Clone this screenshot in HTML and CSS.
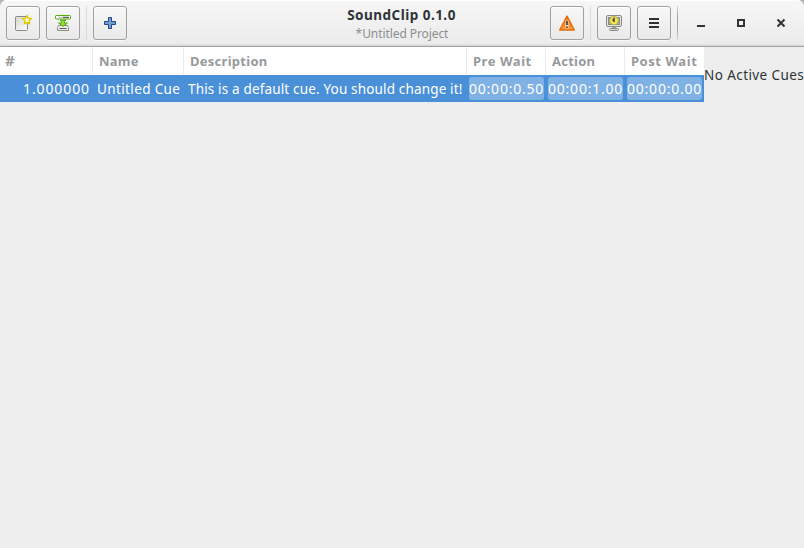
FILE: index.html
```html
<!DOCTYPE html>
<html lang="en">
<head>
<meta charset="utf-8">
<title>SoundClip</title>
<link rel="stylesheet" href="styles.css">
</head>
<body>
<div class="window">
  <header class="headerbar">
    <div class="tools start">
      <button class="btn" aria-label="New">
        <svg width="18" height="18" viewBox="0 0 18 18"><defs><linearGradient id="paper" x2="1" y2="1"><stop stop-color="#d3d7cf"/><stop offset="1" stop-color="#fff"/></linearGradient></defs><rect x="1.500" y="2.500" width="12" height="14" rx="1" fill="url(#paper)" stroke="#888a85"/><path d="M13 1.700l1.300 2.400 2.900.5-2 2.100.4 3L13 8.500l-2.600 1.200.4-3-2-2.100 2.900-.5z" fill="#fffce0" stroke="#e3c800" stroke-width="1.400"/></svg>
      </button>
      <button class="btn" aria-label="Save">
        <svg width="18" height="18" viewBox="0 0 18 18"><path d="M4.500 11.500h9l1 2v3h-11v-3z" fill="#eeeeec" stroke="#888a85"/><path d="M5.500 14.500h7" stroke="#555753"/><rect x="1.500" y="1.500" width="15" height="3.500" rx=".8" fill="#fff" stroke="#4eae0a"/><path d="M4 3.300h5" stroke="#babdb6"/><path d="M9 3.300h6" stroke="#2e3436"/><path d="M6 6h6L10.500 7.500V9h3L9 12.500 4.500 9h3V7.500z" fill="#8ae234" stroke="#4e9a06" stroke-width=".8"/></svg>
      </button>
      <i class="sep"></i>
      <button class="btn" aria-label="Add">
        <svg width="18" height="18" viewBox="0 0 18 18"><path d="M7.500 3.500h3v4h4v3h-4v4h-3v-4h-4v-3h4z" fill="#729fcf" stroke="#204a87" stroke-linejoin="round"/></svg>
      </button>
    </div>
    <div class="titles"><h1>SoundClip 0.1.0</h1><p>*Untitled Project</p></div>
    <div class="tools end">
      <button class="btn" aria-label="Warning">
        <svg width="18" height="18" viewBox="0 0 18 18"><defs><linearGradient id="warn" x2="0" y2="1"><stop stop-color="#f57900"/><stop offset="1" stop-color="#f9993c"/></linearGradient></defs><path d="M9 2.200L16.300 16H1.700z" fill="url(#warn)" stroke="#e66c0c" stroke-width="1.400" stroke-linejoin="round"/><path d="M9 6.500v8" stroke="#fbe3c8" stroke-width="3"/><path d="M9 7v4M9 12.500v1.500" stroke="#2e3436" stroke-width="1.600"/></svg>
      </button>
      <i class="sep"></i>
      <button class="btn" aria-label="Show">
        <svg width="18" height="18" viewBox="0 0 18 18"><rect x="1.500" y="1.500" width="15" height="11" rx="1.500" fill="#e6e8e2" stroke="#888a85"/><rect x="3.500" y="3.500" width="11" height="7" fill="#a9b3b0" stroke="#888a85"/><path d="M7 13h4v2H7z" fill="#a5a7a2"/><rect x="4.500" y="14.500" width="9" height="2" rx="1" fill="#d3d7cf" stroke="#888a85"/><circle cx="9" cy="6.500" r="4.300" fill="#f3e352" stroke="#b3a43a" stroke-width=".8"/><path d="M9 3.500v4.500M7.500 6h1.500" stroke="#2e3436" stroke-width="1.300"/></svg>
      </button>
      <button class="btn menu" aria-label="Menu">
        <svg width="18" height="18" viewBox="0 0 18 18"><path d="M4 5h10M4 9h10M4 13h10" stroke="#2e3436" stroke-width="2"/></svg>
      </button>
      <i class="sep dark"></i>
      <div class="controls">
        <svg width="16" height="16" viewBox="0 0 16 16"><path d="M4 11h8" stroke="#2e3436" stroke-width="2"/></svg>
        <svg width="16" height="16" viewBox="0 0 16 16"><path d="M5 5h6v6H5z" fill="none" stroke="#2e3436" stroke-width="2"/></svg>
        <svg width="16" height="16" viewBox="0 0 16 16"><path d="M4.500 4.500l7 7M11.500 4.500l-7 7" stroke="#2e3436" stroke-width="2"/></svg>
      </div>
    </div>
  </header>
  <main class="content">
    <div class="cues">
      <div class="row head">
        <span class="h-num">#</span><span class="h-name">Name</span><span class="h-desc">Description</span><span class="h-pre">Pre Wait</span><span class="h-act">Action</span><span class="h-post">Post Wait</span>
      </div>
      <div class="row cue">
        <span class="num">1.000000</span><span class="name">Untitled Cue</span><span class="desc">This is a default cue. You should change it!</span><span class="time"><b>00:00:0.50</b></span><span class="time"><b>00:00:1.00</b></span><span class="time"><b>00:00:0.00</b></span>
      </div>
    </div>
    <aside class="active">No Active Cues</aside>
  </main>
</div>
</body>
</html>
```
FILE: styles.css
```css
* { box-sizing: border-box; }
body { margin: 0; background: #b4b6b3; font: 13.5px/20px "Noto Sans", sans-serif; color: #2e3436; }
.window { width: 804px; height: 548px; display: flex; flex-direction: column; overflow: hidden; background: #ededed; border-radius: 7px 7px 0 0; }
.headerbar { height: 47px; flex: none; display: grid; grid-template-columns: 254px 295px 255px; border-bottom: 1px solid #a1a1a1; background: linear-gradient(#f7f7f7, #ebebeb 44px, #d9d9d9 45px); box-shadow: inset 0 1px #fff; }
.tools { display: flex; align-items: flex-start; padding-top: 6px; }
.start { padding-left: 6px; gap: 6px; }
.end { padding-left: 1px; gap: 6px; }
.btn { width: 34px; height: 34px; padding: 0; display: grid; place-items: center; border: 1px solid #a1a1a1; border-radius: 3px; background: linear-gradient(#f8f8f8, #e9e9e9); box-shadow: inset 0 1px #fff, 0 1px #f8f8f8; }
.btn svg, .controls svg { display: block; }
.sep { width: 1px; height: 34px; background: #dadada; }
.dark { background: linear-gradient(#d8d8d8, #a5a5a5 30%, #a5a5a5 70%, #d8d8d8); }
.controls { display: flex; gap: 24px; padding: 9px 0 0 9px; }
.titles { text-align: center; white-space: nowrap; }
.titles h1 { margin: 5px 0 0; font-size: 13.5px; line-height: 20px; font-weight: 700; letter-spacing: .48px; }
.titles p { margin: 0; padding-left: 1px; font-size: 12px; line-height: 18px; letter-spacing: -.08px; color: #8b8e8f; }
.content { flex: 1; display: grid; grid-template-columns: 704px 100px; align-items: start; }
.row { display: grid; grid-template-columns: 93px 91px 283px 79px 79px 79px; white-space: nowrap; }
.head { height: 28px; line-height: 28px; background: #fff; color: #979a9b; font-weight: 700; font-size: 13px; }
.head span { padding-left: 6px; border-right: 1px solid #ebebeb; }
.head span:last-child { border: 0; }
.head .h-num { padding-left: 5px; font-size: 15px; line-height: 27px; }
.h-name, .h-act { letter-spacing: .25px; }
.h-desc { letter-spacing: .27px; }
.h-pre, .h-post { letter-spacing: .55px; }
.cue { height: 27px; line-height: 29px; background: #4a90d9; color: #fff; }
.num { text-align: right; padding-right: 3px; font-size: 14px; line-height: 27px; letter-spacing: .9px; }
.name, .desc { padding-left: 4px; }
.name { letter-spacing: .37px; }
.desc { letter-spacing: .16px; }
.time { padding: 2px; }
.time b { display: block; height: 23px; line-height: 23px; border-radius: 3px; background: #80b1e4; font-size: 14px; font-weight: 400; letter-spacing: .78px; text-align: center; white-space: nowrap; }
.active { padding-top: 18px; white-space: nowrap; letter-spacing: .42px; }
```
